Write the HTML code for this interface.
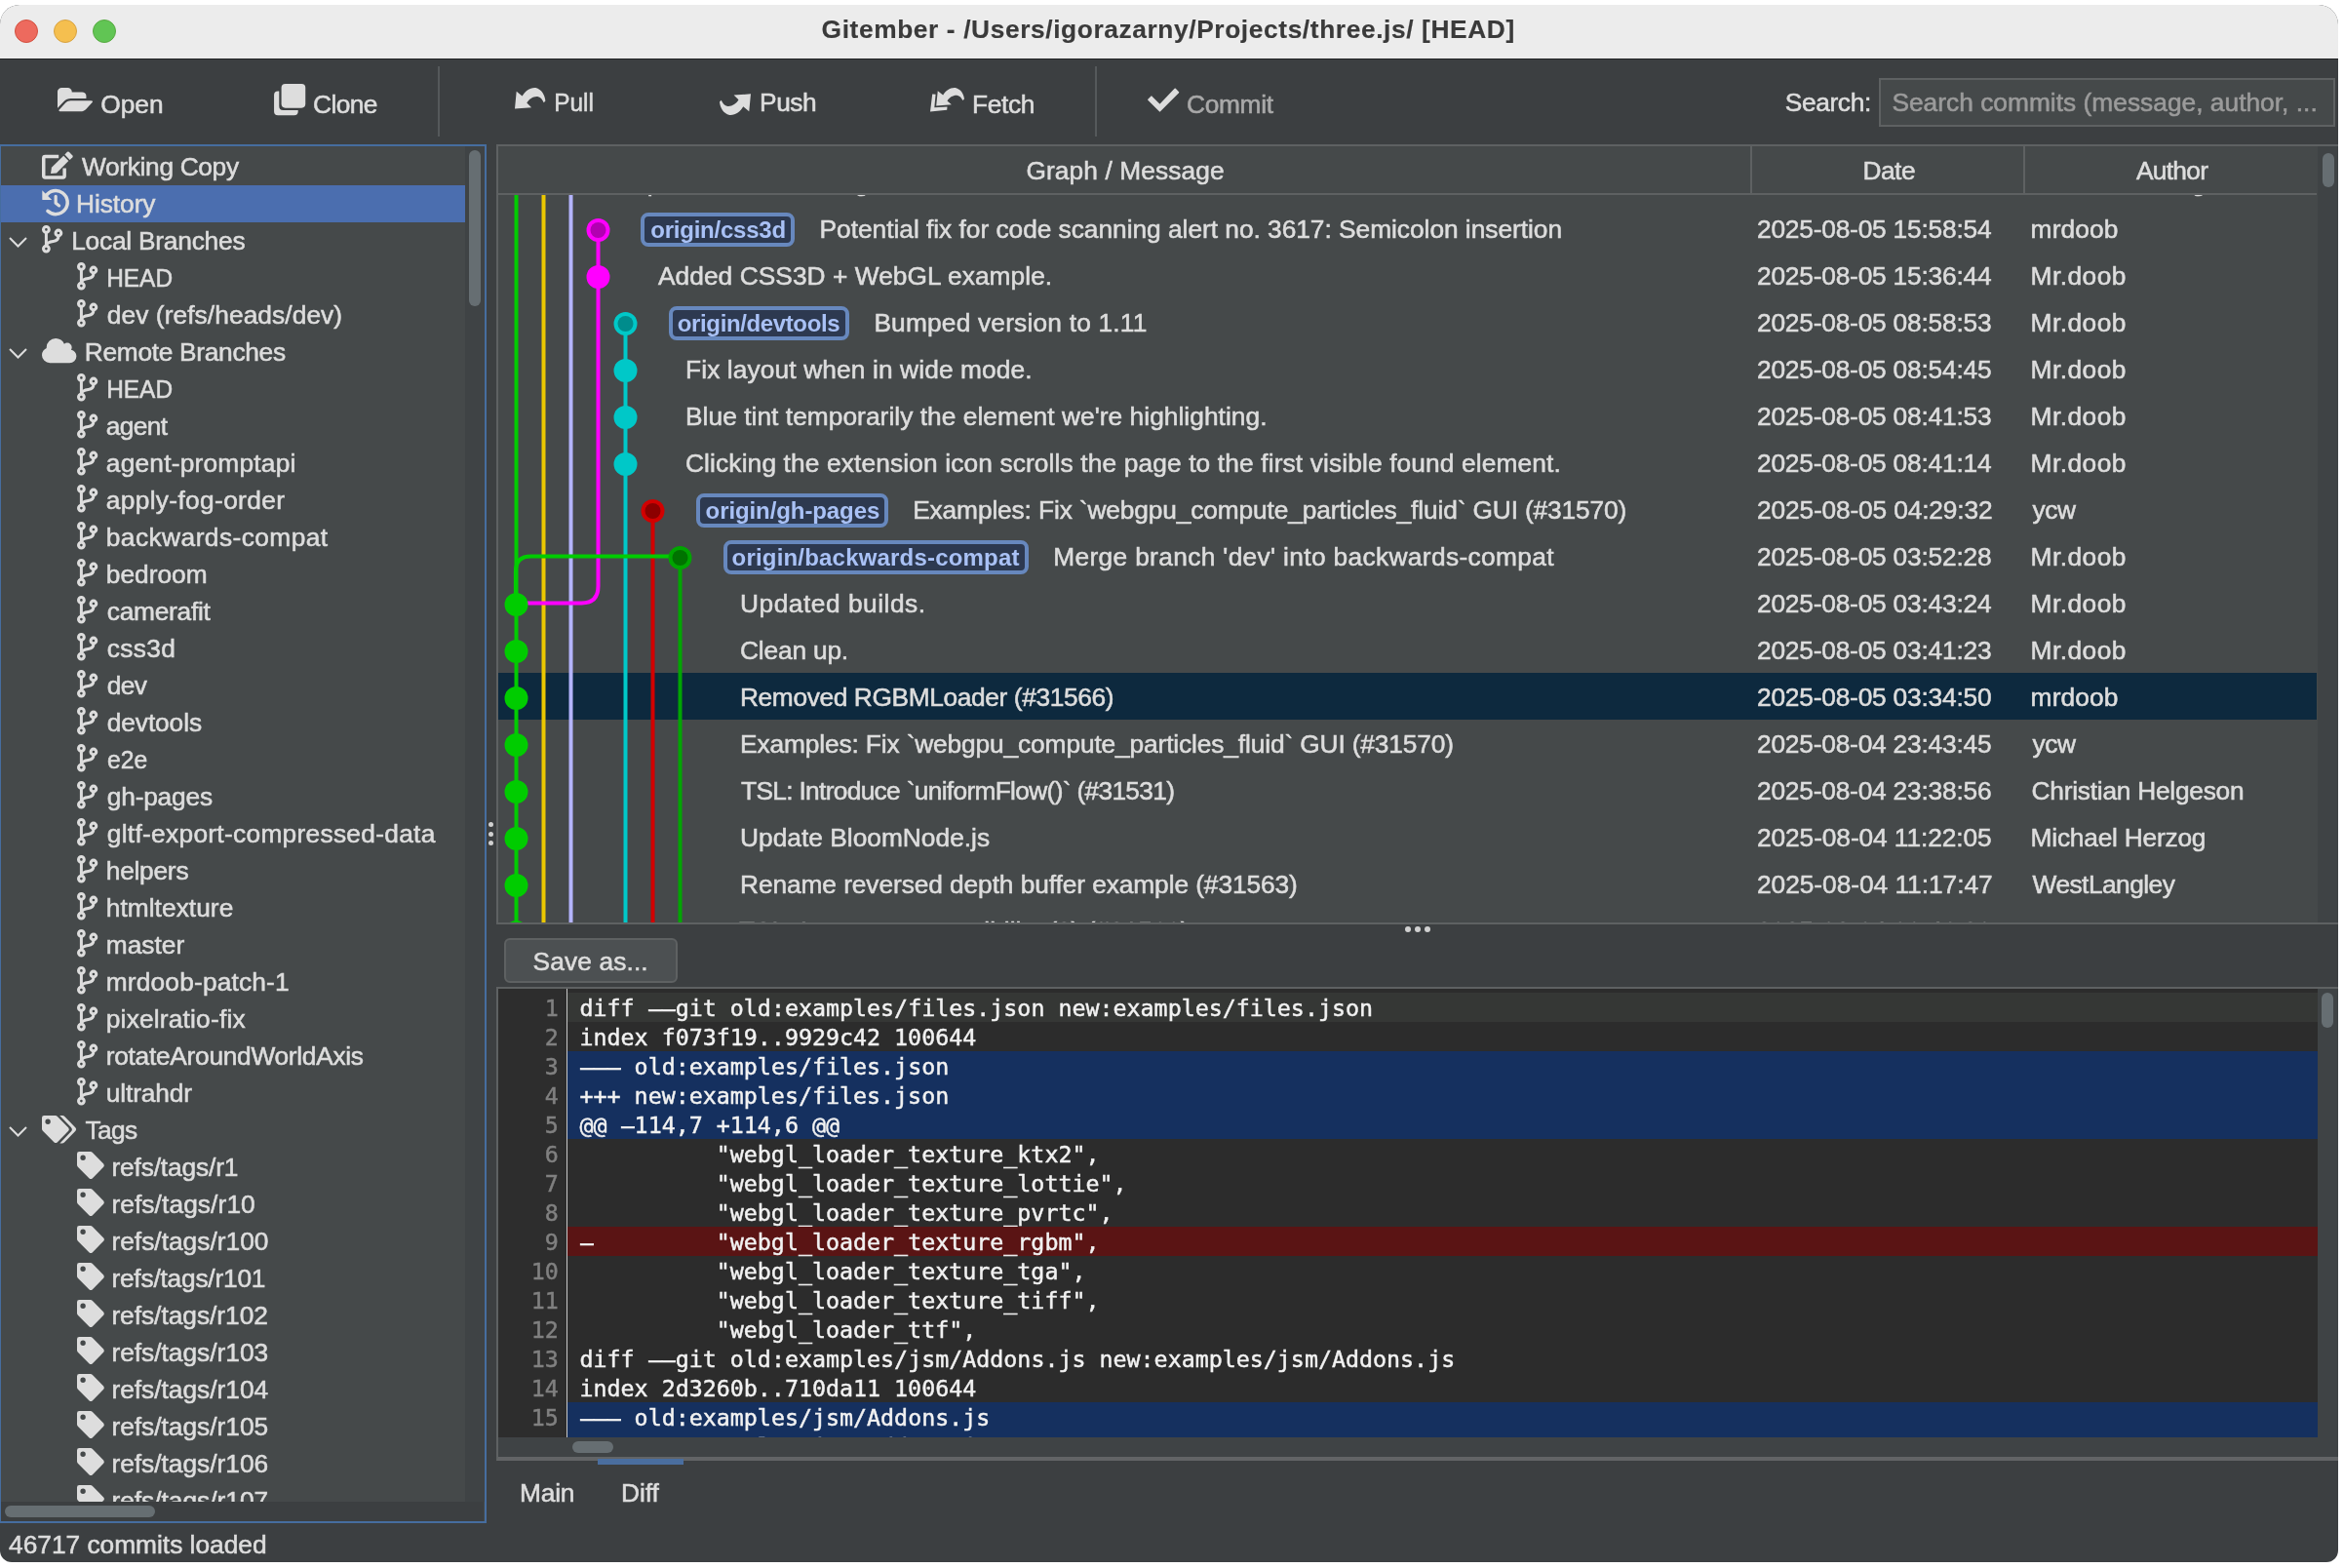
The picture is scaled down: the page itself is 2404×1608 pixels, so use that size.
<!DOCTYPE html><html><head><meta charset="utf-8"><title>Gitember</title><style>
*{box-sizing:border-box;margin:0;padding:0}
html,body{width:2404px;height:1608px;background:#fff;overflow:hidden}
body{font-family:"Liberation Sans",sans-serif;font-size:26.3px;color:#dddddd;position:relative}
#win{will-change:transform;position:absolute;left:0;top:5px;width:2398px;height:1597px;background:#3c3f41;border-radius:20px 20px 12px 12px;overflow:hidden}
.abs{position:absolute}
.t{position:absolute;white-space:pre;line-height:30px;height:30px;-webkit-text-stroke:0.55px currentColor}
.ic{position:absolute;display:block;overflow:visible}
#title{position:absolute;left:0;top:0;width:2398px;height:55px;background:#ececec}
#tline{position:absolute;left:0;top:55px;width:2398px;height:1px;background:#202224}
.dot{position:absolute;border-radius:50%}
.sep{position:absolute;width:2px;background:#55595b}
#tree{position:absolute;left:-1px;top:143px;width:500px;height:1414px;border:2px solid #466d9f;background:#45494a;overflow:hidden}
.tr{position:absolute;left:0;width:476px;height:38px}
.thumb{position:absolute;background:#666e72;border-radius:6px}
.track{position:absolute;background:#3f4345}
#table{position:absolute;left:509px;top:143px;width:1889px;height:800px;border:2px solid #5e6162;border-right:none;background:#45494a;overflow:hidden}
.row{position:absolute;left:0;width:1865px;height:48px}
.badge{position:absolute;height:34.6px;border:4px solid #6788be;border-radius:8px;background:#2d3950}
.bt{position:absolute;white-space:pre;color:#a9c1f5;font-weight:bold;font-size:24px;line-height:28px;height:28px}
#code{position:absolute;left:509px;top:1007px;width:1889px;height:486px;border:2px solid #5e6162;border-bottom:4px solid #626466;border-right:none;background:#2c2c2c;overflow:hidden}
.hy{display:inline-block;transform:scaleX(2.2)}
.mono{font-family:"DejaVu Sans Mono","Liberation Mono",monospace;font-size:23.3px;white-space:pre;line-height:30px;height:30px;position:absolute;-webkit-text-stroke:0.45px currentColor}
</style></head><body><div id="win">
<div id="title"></div><div id="tline"></div>
<div class="dot" style="left:15px;top:15px;width:24px;height:24px;background:#ed6a5e;border:1px solid #d1503f"></div>
<div class="dot" style="left:55px;top:15px;width:24px;height:24px;background:#f5bf4f;border:1px solid #d6a243"></div>
<div class="dot" style="left:95px;top:15px;width:24px;height:24px;background:#61c554;border:1px solid #58a942"></div>
<div class="t" id="ttl" style="left:842.60px;top:9.9px;letter-spacing:0.613px;color:#3a3a3a;font-weight:bold;-webkit-text-stroke:0.15px #3a3a3a;">Gitember - /Users/igorazarny/Projects/three.js/ [HEAD]</div>
<svg class="ic" style="left:59px;top:84.7px;width:36px;height:24.3px" viewBox="0 -1408 1879 1408" preserveAspectRatio="none"><path fill="#dddddd" transform="scale(1,-1)" d="M1879 584q0 -31 -31 -66l-336 -396q-43 -51 -120.5 -86.5t-143.5 -35.5h-1088q-34 0 -60.5 13t-26.5 43q0 31 31 66l336 396q43 51 120.5 86.5t143.5 35.5h1088q34 0 60.5 -13t26.5 -43zM1536 928v-160h-832q-94 0 -197 -47.5t-164 -119.5l-337 -396l-5 -6q0 4 -0.5 12.5 t-0.5 12.5v960q0 92 66 158t158 66h320q92 0 158 -66t66 -158v-32h544q92 0 158 -66t66 -158z"/></svg>
<div class="t" id="b_open" style="left:103.19px;top:86.7px;">Open</div>
<svg class="ic" style="left:280.7px;top:80.8px;width:32.3px;height:32.2px" viewBox="0 0 32 32"><rect x="7.5" y="0" width="24.5" height="24.5" rx="4" fill="#dddddd"/><path fill="#dddddd" d="M4 7.5h1.2v15.3a4 4 0 0 0 4 4H24.5V28a4 4 0 0 1-4 4H4a4 4 0 0 1-4-4V11.5a4 4 0 0 1 4-4z"/></svg>
<div class="t" id="b_clone" style="left:321.00px;top:86.7px;letter-spacing:-0.575px;">Clone</div>
<div class="sep" style="left:449px;top:63px;height:72px"></div>
<svg class="ic" id="i_pull" style="left:527.9px;top:85.2px;width:31.4px;height:21.8px" viewBox="0 0 31.4 21.8"><path fill="#dddddd" d="M1.7 3.8 L0 21.5 L17.1 20.2 L12.3 15.6 C14.5 11.5 19 8.6 23.3 9 C26.3 9.5 28.3 12 29.7 15.2 L31.4 13.4 C30.8 7.5 27.5 1.5 21.4 0 C15.5 -0.5 10.5 3.5 7.6 8.6 Z"/></svg>
<div class="t" id="b_pull" style="left:568.00px;top:84.6px;transform:scaleX(0.9286);transform-origin:2px 0;">Pull</div>
<svg class="ic" id="i_push" style="left:738px;top:91px;width:32px;height:22px" viewBox="0 0 31.4 21.8" preserveAspectRatio="none"><path fill="#dddddd" transform="rotate(180 15.7 10.9)" d="M1.7 3.8 L0 21.5 L17.1 20.2 L12.3 15.6 C14.5 11.5 19 8.6 23.3 9 C26.3 9.5 28.3 12 29.7 15.2 L31.4 13.4 C30.8 7.5 27.5 1.5 21.4 0 C15.5 -0.5 10.5 3.5 7.6 8.6 Z"/></svg>
<div class="t" id="b_push" style="left:779.00px;top:84.6px;letter-spacing:-0.400px;">Push</div>
<svg class="ic" id="i_fetch" style="left:953.5px;top:84.6px;width:35px;height:24.4px" viewBox="0 0 35 24.4"><path fill="#dddddd" d="M2.2 6.5 L5.6 6.8 L4.3 20.3 L17.5 19.4 L17.2 22.8 L0 24.4 Z"/><g transform="translate(6.2,0) scale(0.917,0.86)"><path fill="#dddddd" d="M1.7 3.8 L0 21.5 L17.1 20.2 L12.3 15.6 C14.5 11.5 19 8.6 23.3 9 C26.3 9.5 28.3 12 29.7 15.2 L31.4 13.4 C30.8 7.5 27.5 1.5 21.4 0 C15.5 -0.5 10.5 3.5 7.6 8.6 Z"/></g></svg>
<div class="t" id="b_fetch" style="left:997.00px;top:86.7px;letter-spacing:-0.325px;">Fetch</div>
<div class="sep" style="left:1123px;top:63px;height:72px"></div>
<svg class="ic" style="left:1177px;top:84.6px;width:32.4px;height:24.8px" viewBox="0 0 32.4 24.8"><path fill="#dddddd" stroke="#dddddd" stroke-width="1.6" stroke-linejoin="round" d="M0.9 12.3 L3.9 9.2 L12.5 17.7 L28.2 1.3 L31.5 4.7 L12.5 23.8 Z"/></svg>
<div class="t" id="b_commit" style="left:1217.00px;top:86.7px;letter-spacing:-0.300px;color:#a9a9a9;">Commit</div>
<div class="t" id="b_search" style="left:1830.79px;top:85.1px;letter-spacing:-0.367px;">Search:</div>
<div class="abs" style="left:1927px;top:75px;width:468px;height:50px;border:2px solid #5e6162;background:#45494a"></div>
<div class="t" id="b_ph" style="left:1940.39px;top:85.1px;letter-spacing:0.023px;color:#9b9b9b;">Search commits (message, author, ...</div>
<div id="tree">
<div class="tr" style="top:2px;">
<svg class="ic" style="left:41.8px;top:3px;width:32.2px;height:28.7px" viewBox="0 0 32.2 28.7"><path fill="none" stroke="#dddddd" stroke-width="3.5" stroke-linejoin="round" d="M17.2 5.55 H3.4 Q1.75 5.55 1.75 7.2 V25.3 Q1.75 26.95 3.4 26.95 H21.5 Q23.15 26.95 23.15 25.3 V17.5"/><path fill="#dddddd" d="M19 3.8 L9.9 16.8 Z"/><path fill="#dddddd" d="M9.9 16.8 L22.2 4.8 L27.3 10.1 L15 22.4 L9.1 23.1 Z"/><path fill="#dddddd" d="M23.4 3.5 L26 0.8 Q26.9 0 27.8 0.8 L31.4 4.5 Q32.2 5.4 31.4 6.3 L28.6 9 Z"/></svg>
<div class="t" id="tr0" style="left:83.00px;top:4.2px;letter-spacing:-0.327px;">Working Copy</div>
</div>
<div class="tr" style="top:40px;background:#4b6eaf;">
<svg class="ic" style="left:41.8px;top:3.8px;width:28px;height:27.4px" viewBox="0 0 28 27.4"><path fill="none" stroke="#dddddd" stroke-width="3.5" stroke-linecap="round" d="M3.93 7.21 A12.05 12.05 0 1 1 5.93 22.41"/><path fill="#dddddd" d="M0.3 1.2 L10.2 11 H0.9 Q0.3 11 0.3 10.4 Z"/><path fill="none" stroke="#dddddd" stroke-width="3.2" stroke-linecap="round" stroke-linejoin="round" d="M14.15 7.3 V14.2 L17.6 16.9"/></svg>
<div class="t" id="tr1" style="left:77.00px;top:4.2px;letter-spacing:-0.050px;">History</div>
</div>
<div class="tr" style="top:78px;">
<svg class="ic" style="left:8px;top:14.5px;width:19px;height:11px" viewBox="0 0 19 11"><path d="M1 1 L9.5 9.5 L18 1" fill="none" stroke="#dddddd" stroke-width="2"/></svg>
<svg class="ic" style="left:41.8px;top:3.2px;width:21.4px;height:28.5px" viewBox="0 0 21.4 28.5"><g fill="none" stroke="#dddddd"><circle cx="4.4" cy="4.4" r="2.85" stroke-width="3.1"/><circle cx="4.4" cy="24.1" r="2.85" stroke-width="3.1"/><circle cx="16.9" cy="8" r="2.85" stroke-width="3.1"/><path d="M4.4 8 V20.5" stroke-width="3"/><path d="M16.9 11.5 Q16.9 15.8 11.5 16.5 Q5.5 17.2 4.6 20.5" stroke-width="3"/></g></svg>
<div class="t" id="tr2" style="left:72.19px;top:4.2px;letter-spacing:-0.223px;">Local Branches</div>
</div>
<div class="tr" style="top:116px;">
<svg class="ic" style="left:77.8px;top:3.2px;width:21.4px;height:28.5px" viewBox="0 0 21.4 28.5"><g fill="none" stroke="#dddddd"><circle cx="4.4" cy="4.4" r="2.85" stroke-width="3.1"/><circle cx="4.4" cy="24.1" r="2.85" stroke-width="3.1"/><circle cx="16.9" cy="8" r="2.85" stroke-width="3.1"/><path d="M4.4 8 V20.5" stroke-width="3"/><path d="M16.9 11.5 Q16.9 15.8 11.5 16.5 Q5.5 17.2 4.6 20.5" stroke-width="3"/></g></svg>
<div class="t" id="tr3" style="left:107.79px;top:4.2px;transform:scaleX(0.9296);transform-origin:2px 0;">HEAD</div>
</div>
<div class="tr" style="top:154px;">
<svg class="ic" style="left:77.8px;top:3.2px;width:21.4px;height:28.5px" viewBox="0 0 21.4 28.5"><g fill="none" stroke="#dddddd"><circle cx="4.4" cy="4.4" r="2.85" stroke-width="3.1"/><circle cx="4.4" cy="24.1" r="2.85" stroke-width="3.1"/><circle cx="16.9" cy="8" r="2.85" stroke-width="3.1"/><path d="M4.4 8 V20.5" stroke-width="3"/><path d="M16.9 11.5 Q16.9 15.8 11.5 16.5 Q5.5 17.2 4.6 20.5" stroke-width="3"/></g></svg>
<div class="t" id="tr4" style="left:108.79px;top:4.2px;letter-spacing:0.084px;">dev (refs/heads/dev)</div>
</div>
<div class="tr" style="top:192px;">
<svg class="ic" style="left:8px;top:14.5px;width:19px;height:11px" viewBox="0 0 19 11"><path d="M1 1 L9.5 9.5 L18 1" fill="none" stroke="#dddddd" stroke-width="2"/></svg>
<svg class="ic" style="left:41.8px;top:5.1px;width:35.4px;height:25.2px" viewBox="0 -1408 1920 1408" preserveAspectRatio="none"><path fill="#dddddd" transform="scale(1,-1)" d="M1920 384q0 -159 -112.5 -271.5t-271.5 -112.5h-1088q-185 0 -316.5 131.5t-131.5 316.5q0 132 71 241.5t187 163.5q-2 28 -2 43q0 212 150 362t362 150q158 0 286.5 -88t187.5 -230q70 62 166 62q106 0 181 -75t75 -181q0 -75 -41 -138q129 -30 213 -134.5t84 -239.5z"/></svg>
<div class="t" id="tr5" style="left:85.79px;top:4.2px;letter-spacing:-0.300px;">Remote Branches</div>
</div>
<div class="tr" style="top:230px;">
<svg class="ic" style="left:77.8px;top:3.2px;width:21.4px;height:28.5px" viewBox="0 0 21.4 28.5"><g fill="none" stroke="#dddddd"><circle cx="4.4" cy="4.4" r="2.85" stroke-width="3.1"/><circle cx="4.4" cy="24.1" r="2.85" stroke-width="3.1"/><circle cx="16.9" cy="8" r="2.85" stroke-width="3.1"/><path d="M4.4 8 V20.5" stroke-width="3"/><path d="M16.9 11.5 Q16.9 15.8 11.5 16.5 Q5.5 17.2 4.6 20.5" stroke-width="3"/></g></svg>
<div class="t" id="tr6" style="left:107.79px;top:4.2px;transform:scaleX(0.9296);transform-origin:2px 0;">HEAD</div>
</div>
<div class="tr" style="top:268px;">
<svg class="ic" style="left:77.8px;top:3.2px;width:21.4px;height:28.5px" viewBox="0 0 21.4 28.5"><g fill="none" stroke="#dddddd"><circle cx="4.4" cy="4.4" r="2.85" stroke-width="3.1"/><circle cx="4.4" cy="24.1" r="2.85" stroke-width="3.1"/><circle cx="16.9" cy="8" r="2.85" stroke-width="3.1"/><path d="M4.4 8 V20.5" stroke-width="3"/><path d="M16.9 11.5 Q16.9 15.8 11.5 16.5 Q5.5 17.2 4.6 20.5" stroke-width="3"/></g></svg>
<div class="t" id="tr7" style="left:107.79px;top:4.2px;letter-spacing:-0.650px;">agent</div>
</div>
<div class="tr" style="top:306px;">
<svg class="ic" style="left:77.8px;top:3.2px;width:21.4px;height:28.5px" viewBox="0 0 21.4 28.5"><g fill="none" stroke="#dddddd"><circle cx="4.4" cy="4.4" r="2.85" stroke-width="3.1"/><circle cx="4.4" cy="24.1" r="2.85" stroke-width="3.1"/><circle cx="16.9" cy="8" r="2.85" stroke-width="3.1"/><path d="M4.4 8 V20.5" stroke-width="3"/><path d="M16.9 11.5 Q16.9 15.8 11.5 16.5 Q5.5 17.2 4.6 20.5" stroke-width="3"/></g></svg>
<div class="t" id="tr8" style="left:107.79px;top:4.2px;letter-spacing:0.221px;">agent-promptapi</div>
</div>
<div class="tr" style="top:344px;">
<svg class="ic" style="left:77.8px;top:3.2px;width:21.4px;height:28.5px" viewBox="0 0 21.4 28.5"><g fill="none" stroke="#dddddd"><circle cx="4.4" cy="4.4" r="2.85" stroke-width="3.1"/><circle cx="4.4" cy="24.1" r="2.85" stroke-width="3.1"/><circle cx="16.9" cy="8" r="2.85" stroke-width="3.1"/><path d="M4.4 8 V20.5" stroke-width="3"/><path d="M16.9 11.5 Q16.9 15.8 11.5 16.5 Q5.5 17.2 4.6 20.5" stroke-width="3"/></g></svg>
<div class="t" id="tr9" style="left:107.79px;top:4.2px;letter-spacing:0.343px;">apply-fog-order</div>
</div>
<div class="tr" style="top:382px;">
<svg class="ic" style="left:77.8px;top:3.2px;width:21.4px;height:28.5px" viewBox="0 0 21.4 28.5"><g fill="none" stroke="#dddddd"><circle cx="4.4" cy="4.4" r="2.85" stroke-width="3.1"/><circle cx="4.4" cy="24.1" r="2.85" stroke-width="3.1"/><circle cx="16.9" cy="8" r="2.85" stroke-width="3.1"/><path d="M4.4 8 V20.5" stroke-width="3"/><path d="M16.9 11.5 Q16.9 15.8 11.5 16.5 Q5.5 17.2 4.6 20.5" stroke-width="3"/></g></svg>
<div class="t" id="tr10" style="left:107.79px;top:4.2px;letter-spacing:0.447px;">backwards-compat</div>
</div>
<div class="tr" style="top:420px;">
<svg class="ic" style="left:77.8px;top:3.2px;width:21.4px;height:28.5px" viewBox="0 0 21.4 28.5"><g fill="none" stroke="#dddddd"><circle cx="4.4" cy="4.4" r="2.85" stroke-width="3.1"/><circle cx="4.4" cy="24.1" r="2.85" stroke-width="3.1"/><circle cx="16.9" cy="8" r="2.85" stroke-width="3.1"/><path d="M4.4 8 V20.5" stroke-width="3"/><path d="M16.9 11.5 Q16.9 15.8 11.5 16.5 Q5.5 17.2 4.6 20.5" stroke-width="3"/></g></svg>
<div class="t" id="tr11" style="left:107.79px;top:4.2px;">bedroom</div>
</div>
<div class="tr" style="top:458px;">
<svg class="ic" style="left:77.8px;top:3.2px;width:21.4px;height:28.5px" viewBox="0 0 21.4 28.5"><g fill="none" stroke="#dddddd"><circle cx="4.4" cy="4.4" r="2.85" stroke-width="3.1"/><circle cx="4.4" cy="24.1" r="2.85" stroke-width="3.1"/><circle cx="16.9" cy="8" r="2.85" stroke-width="3.1"/><path d="M4.4 8 V20.5" stroke-width="3"/><path d="M16.9 11.5 Q16.9 15.8 11.5 16.5 Q5.5 17.2 4.6 20.5" stroke-width="3"/></g></svg>
<div class="t" id="tr12" style="left:108.79px;top:4.2px;letter-spacing:-0.250px;">camerafit</div>
</div>
<div class="tr" style="top:496px;">
<svg class="ic" style="left:77.8px;top:3.2px;width:21.4px;height:28.5px" viewBox="0 0 21.4 28.5"><g fill="none" stroke="#dddddd"><circle cx="4.4" cy="4.4" r="2.85" stroke-width="3.1"/><circle cx="4.4" cy="24.1" r="2.85" stroke-width="3.1"/><circle cx="16.9" cy="8" r="2.85" stroke-width="3.1"/><path d="M4.4 8 V20.5" stroke-width="3"/><path d="M16.9 11.5 Q16.9 15.8 11.5 16.5 Q5.5 17.2 4.6 20.5" stroke-width="3"/></g></svg>
<div class="t" id="tr13" style="left:108.79px;top:4.2px;letter-spacing:0.375px;">css3d</div>
</div>
<div class="tr" style="top:534px;">
<svg class="ic" style="left:77.8px;top:3.2px;width:21.4px;height:28.5px" viewBox="0 0 21.4 28.5"><g fill="none" stroke="#dddddd"><circle cx="4.4" cy="4.4" r="2.85" stroke-width="3.1"/><circle cx="4.4" cy="24.1" r="2.85" stroke-width="3.1"/><circle cx="16.9" cy="8" r="2.85" stroke-width="3.1"/><path d="M4.4 8 V20.5" stroke-width="3"/><path d="M16.9 11.5 Q16.9 15.8 11.5 16.5 Q5.5 17.2 4.6 20.5" stroke-width="3"/></g></svg>
<div class="t" id="tr14" style="left:108.79px;top:4.2px;letter-spacing:-0.700px;">dev</div>
</div>
<div class="tr" style="top:572px;">
<svg class="ic" style="left:77.8px;top:3.2px;width:21.4px;height:28.5px" viewBox="0 0 21.4 28.5"><g fill="none" stroke="#dddddd"><circle cx="4.4" cy="4.4" r="2.85" stroke-width="3.1"/><circle cx="4.4" cy="24.1" r="2.85" stroke-width="3.1"/><circle cx="16.9" cy="8" r="2.85" stroke-width="3.1"/><path d="M4.4 8 V20.5" stroke-width="3"/><path d="M16.9 11.5 Q16.9 15.8 11.5 16.5 Q5.5 17.2 4.6 20.5" stroke-width="3"/></g></svg>
<div class="t" id="tr15" style="left:108.79px;top:4.2px;letter-spacing:-0.100px;">devtools</div>
</div>
<div class="tr" style="top:610px;">
<svg class="ic" style="left:77.8px;top:3.2px;width:21.4px;height:28.5px" viewBox="0 0 21.4 28.5"><g fill="none" stroke="#dddddd"><circle cx="4.4" cy="4.4" r="2.85" stroke-width="3.1"/><circle cx="4.4" cy="24.1" r="2.85" stroke-width="3.1"/><circle cx="16.9" cy="8" r="2.85" stroke-width="3.1"/><path d="M4.4 8 V20.5" stroke-width="3"/><path d="M16.9 11.5 Q16.9 15.8 11.5 16.5 Q5.5 17.2 4.6 20.5" stroke-width="3"/></g></svg>
<div class="t" id="tr16" style="left:108.79px;top:4.2px;transform:scaleX(0.9395);transform-origin:2px 0;">e2e</div>
</div>
<div class="tr" style="top:648px;">
<svg class="ic" style="left:77.8px;top:3.2px;width:21.4px;height:28.5px" viewBox="0 0 21.4 28.5"><g fill="none" stroke="#dddddd"><circle cx="4.4" cy="4.4" r="2.85" stroke-width="3.1"/><circle cx="4.4" cy="24.1" r="2.85" stroke-width="3.1"/><circle cx="16.9" cy="8" r="2.85" stroke-width="3.1"/><path d="M4.4 8 V20.5" stroke-width="3"/><path d="M16.9 11.5 Q16.9 15.8 11.5 16.5 Q5.5 17.2 4.6 20.5" stroke-width="3"/></g></svg>
<div class="t" id="tr17" style="left:108.79px;top:4.2px;letter-spacing:-0.200px;">gh-pages</div>
</div>
<div class="tr" style="top:686px;">
<svg class="ic" style="left:77.8px;top:3.2px;width:21.4px;height:28.5px" viewBox="0 0 21.4 28.5"><g fill="none" stroke="#dddddd"><circle cx="4.4" cy="4.4" r="2.85" stroke-width="3.1"/><circle cx="4.4" cy="24.1" r="2.85" stroke-width="3.1"/><circle cx="16.9" cy="8" r="2.85" stroke-width="3.1"/><path d="M4.4 8 V20.5" stroke-width="3"/><path d="M16.9 11.5 Q16.9 15.8 11.5 16.5 Q5.5 17.2 4.6 20.5" stroke-width="3"/></g></svg>
<div class="t" id="tr18" style="left:108.79px;top:4.2px;letter-spacing:0.296px;">gltf-export-compressed-data</div>
</div>
<div class="tr" style="top:724px;">
<svg class="ic" style="left:77.8px;top:3.2px;width:21.4px;height:28.5px" viewBox="0 0 21.4 28.5"><g fill="none" stroke="#dddddd"><circle cx="4.4" cy="4.4" r="2.85" stroke-width="3.1"/><circle cx="4.4" cy="24.1" r="2.85" stroke-width="3.1"/><circle cx="16.9" cy="8" r="2.85" stroke-width="3.1"/><path d="M4.4 8 V20.5" stroke-width="3"/><path d="M16.9 11.5 Q16.9 15.8 11.5 16.5 Q5.5 17.2 4.6 20.5" stroke-width="3"/></g></svg>
<div class="t" id="tr19" style="left:107.79px;top:4.2px;letter-spacing:-0.250px;">helpers</div>
</div>
<div class="tr" style="top:762px;">
<svg class="ic" style="left:77.8px;top:3.2px;width:21.4px;height:28.5px" viewBox="0 0 21.4 28.5"><g fill="none" stroke="#dddddd"><circle cx="4.4" cy="4.4" r="2.85" stroke-width="3.1"/><circle cx="4.4" cy="24.1" r="2.85" stroke-width="3.1"/><circle cx="16.9" cy="8" r="2.85" stroke-width="3.1"/><path d="M4.4 8 V20.5" stroke-width="3"/><path d="M16.9 11.5 Q16.9 15.8 11.5 16.5 Q5.5 17.2 4.6 20.5" stroke-width="3"/></g></svg>
<div class="t" id="tr20" style="left:107.79px;top:4.2px;letter-spacing:0.040px;">htmltexture</div>
</div>
<div class="tr" style="top:800px;">
<svg class="ic" style="left:77.8px;top:3.2px;width:21.4px;height:28.5px" viewBox="0 0 21.4 28.5"><g fill="none" stroke="#dddddd"><circle cx="4.4" cy="4.4" r="2.85" stroke-width="3.1"/><circle cx="4.4" cy="24.1" r="2.85" stroke-width="3.1"/><circle cx="16.9" cy="8" r="2.85" stroke-width="3.1"/><path d="M4.4 8 V20.5" stroke-width="3"/><path d="M16.9 11.5 Q16.9 15.8 11.5 16.5 Q5.5 17.2 4.6 20.5" stroke-width="3"/></g></svg>
<div class="t" id="tr21" style="left:107.79px;top:4.2px;letter-spacing:0.020px;">master</div>
</div>
<div class="tr" style="top:838px;">
<svg class="ic" style="left:77.8px;top:3.2px;width:21.4px;height:28.5px" viewBox="0 0 21.4 28.5"><g fill="none" stroke="#dddddd"><circle cx="4.4" cy="4.4" r="2.85" stroke-width="3.1"/><circle cx="4.4" cy="24.1" r="2.85" stroke-width="3.1"/><circle cx="16.9" cy="8" r="2.85" stroke-width="3.1"/><path d="M4.4 8 V20.5" stroke-width="3"/><path d="M16.9 11.5 Q16.9 15.8 11.5 16.5 Q5.5 17.2 4.6 20.5" stroke-width="3"/></g></svg>
<div class="t" id="tr22" style="left:107.79px;top:4.2px;letter-spacing:0.169px;">mrdoob-patch-1</div>
</div>
<div class="tr" style="top:876px;">
<svg class="ic" style="left:77.8px;top:3.2px;width:21.4px;height:28.5px" viewBox="0 0 21.4 28.5"><g fill="none" stroke="#dddddd"><circle cx="4.4" cy="4.4" r="2.85" stroke-width="3.1"/><circle cx="4.4" cy="24.1" r="2.85" stroke-width="3.1"/><circle cx="16.9" cy="8" r="2.85" stroke-width="3.1"/><path d="M4.4 8 V20.5" stroke-width="3"/><path d="M16.9 11.5 Q16.9 15.8 11.5 16.5 Q5.5 17.2 4.6 20.5" stroke-width="3"/></g></svg>
<div class="t" id="tr23" style="left:107.79px;top:4.2px;letter-spacing:0.192px;">pixelratio-fix</div>
</div>
<div class="tr" style="top:914px;">
<svg class="ic" style="left:77.8px;top:3.2px;width:21.4px;height:28.5px" viewBox="0 0 21.4 28.5"><g fill="none" stroke="#dddddd"><circle cx="4.4" cy="4.4" r="2.85" stroke-width="3.1"/><circle cx="4.4" cy="24.1" r="2.85" stroke-width="3.1"/><circle cx="16.9" cy="8" r="2.85" stroke-width="3.1"/><path d="M4.4 8 V20.5" stroke-width="3"/><path d="M16.9 11.5 Q16.9 15.8 11.5 16.5 Q5.5 17.2 4.6 20.5" stroke-width="3"/></g></svg>
<div class="t" id="tr24" style="left:107.79px;top:4.2px;letter-spacing:-0.285px;">rotateAroundWorldAxis</div>
</div>
<div class="tr" style="top:952px;">
<svg class="ic" style="left:77.8px;top:3.2px;width:21.4px;height:28.5px" viewBox="0 0 21.4 28.5"><g fill="none" stroke="#dddddd"><circle cx="4.4" cy="4.4" r="2.85" stroke-width="3.1"/><circle cx="4.4" cy="24.1" r="2.85" stroke-width="3.1"/><circle cx="16.9" cy="8" r="2.85" stroke-width="3.1"/><path d="M4.4 8 V20.5" stroke-width="3"/><path d="M16.9 11.5 Q16.9 15.8 11.5 16.5 Q5.5 17.2 4.6 20.5" stroke-width="3"/></g></svg>
<div class="t" id="tr25" style="left:107.79px;top:4.2px;letter-spacing:-0.129px;">ultrahdr</div>
</div>
<div class="tr" style="top:990px;">
<svg class="ic" style="left:8px;top:14.5px;width:19px;height:11px" viewBox="0 0 19 11"><path d="M1 1 L9.5 9.5 L18 1" fill="none" stroke="#dddddd" stroke-width="2"/></svg>
<svg class="ic" style="left:41.85px;top:3.8px;width:35.9px;height:28.8px" viewBox="0 0 35.9 28.8"><path fill="#dddddd" fill-rule="evenodd" d="M2.3 0 H13.8 Q15 0 15.9 0.9 L27.2 12.5 Q28.6 14.2 27.2 15.7 L15.7 27.4 Q14.2 28.8 12.6 27.4 L0.9 15.8 Q0 15 0 13.8 V2.3 Q0 0 2.3 0 Z M6.1 3.6 A2.7 2.7 0 1 0 6.1 9 A2.7 2.7 0 1 0 6.1 3.6 Z"/><path fill="#dddddd" d="M18.2 0 L21.2 0 Q22.4 0 23.3 0.9 L34.5 12.6 Q35.9 14.2 34.5 15.8 L23 27.5 Q22 28.4 20.7 28.4 L18.4 28.4 L29.8 16.6 Q32 14.2 29.8 11.9 Z"/></svg>
<div class="t" id="tr26" style="left:86.60px;top:4.2px;letter-spacing:-0.700px;">Tags</div>
</div>
<div class="tr" style="top:1028px;">
<svg class="ic" style="left:77.97px;top:3.3px;width:28.6px;height:28.8px" viewBox="0 0 28.6 28.8"><path fill="#dddddd" fill-rule="evenodd" d="M2.3 0 H13.8 Q15 0 15.9 0.9 L27.2 12.5 Q28.6 14.2 27.2 15.7 L15.7 27.4 Q14.2 28.8 12.6 27.4 L0.9 15.8 Q0 15 0 13.8 V2.3 Q0 0 2.3 0 Z M6.1 3.6 A2.7 2.7 0 1 0 6.1 9 A2.7 2.7 0 1 0 6.1 3.6 Z"/></svg>
<div class="t" id="tr27" style="left:113.39px;top:4.2px;letter-spacing:-0.136px;">refs/tags/r1</div>
</div>
<div class="tr" style="top:1066px;">
<svg class="ic" style="left:77.97px;top:3.3px;width:28.6px;height:28.8px" viewBox="0 0 28.6 28.8"><path fill="#dddddd" fill-rule="evenodd" d="M2.3 0 H13.8 Q15 0 15.9 0.9 L27.2 12.5 Q28.6 14.2 27.2 15.7 L15.7 27.4 Q14.2 28.8 12.6 27.4 L0.9 15.8 Q0 15 0 13.8 V2.3 Q0 0 2.3 0 Z M6.1 3.6 A2.7 2.7 0 1 0 6.1 9 A2.7 2.7 0 1 0 6.1 3.6 Z"/></svg>
<div class="t" id="tr28" style="left:113.39px;top:4.2px;letter-spacing:0.100px;">refs/tags/r10</div>
</div>
<div class="tr" style="top:1104px;">
<svg class="ic" style="left:77.97px;top:3.3px;width:28.6px;height:28.8px" viewBox="0 0 28.6 28.8"><path fill="#dddddd" fill-rule="evenodd" d="M2.3 0 H13.8 Q15 0 15.9 0.9 L27.2 12.5 Q28.6 14.2 27.2 15.7 L15.7 27.4 Q14.2 28.8 12.6 27.4 L0.9 15.8 Q0 15 0 13.8 V2.3 Q0 0 2.3 0 Z M6.1 3.6 A2.7 2.7 0 1 0 6.1 9 A2.7 2.7 0 1 0 6.1 3.6 Z"/></svg>
<div class="t" id="tr29" style="left:113.39px;top:4.2px;letter-spacing:0.023px;">refs/tags/r100</div>
</div>
<div class="tr" style="top:1142px;">
<svg class="ic" style="left:77.97px;top:3.3px;width:28.6px;height:28.8px" viewBox="0 0 28.6 28.8"><path fill="#dddddd" fill-rule="evenodd" d="M2.3 0 H13.8 Q15 0 15.9 0.9 L27.2 12.5 Q28.6 14.2 27.2 15.7 L15.7 27.4 Q14.2 28.8 12.6 27.4 L0.9 15.8 Q0 15 0 13.8 V2.3 Q0 0 2.3 0 Z M6.1 3.6 A2.7 2.7 0 1 0 6.1 9 A2.7 2.7 0 1 0 6.1 3.6 Z"/></svg>
<div class="t" id="tr30" style="left:113.39px;top:4.2px;letter-spacing:-0.208px;">refs/tags/r101</div>
</div>
<div class="tr" style="top:1180px;">
<svg class="ic" style="left:77.97px;top:3.3px;width:28.6px;height:28.8px" viewBox="0 0 28.6 28.8"><path fill="#dddddd" fill-rule="evenodd" d="M2.3 0 H13.8 Q15 0 15.9 0.9 L27.2 12.5 Q28.6 14.2 27.2 15.7 L15.7 27.4 Q14.2 28.8 12.6 27.4 L0.9 15.8 Q0 15 0 13.8 V2.3 Q0 0 2.3 0 Z M6.1 3.6 A2.7 2.7 0 1 0 6.1 9 A2.7 2.7 0 1 0 6.1 3.6 Z"/></svg>
<div class="t" id="tr31" style="left:113.39px;top:4.2px;letter-spacing:-0.023px;">refs/tags/r102</div>
</div>
<div class="tr" style="top:1218px;">
<svg class="ic" style="left:77.97px;top:3.3px;width:28.6px;height:28.8px" viewBox="0 0 28.6 28.8"><path fill="#dddddd" fill-rule="evenodd" d="M2.3 0 H13.8 Q15 0 15.9 0.9 L27.2 12.5 Q28.6 14.2 27.2 15.7 L15.7 27.4 Q14.2 28.8 12.6 27.4 L0.9 15.8 Q0 15 0 13.8 V2.3 Q0 0 2.3 0 Z M6.1 3.6 A2.7 2.7 0 1 0 6.1 9 A2.7 2.7 0 1 0 6.1 3.6 Z"/></svg>
<div class="t" id="tr32" style="left:113.39px;top:4.2px;">refs/tags/r103</div>
</div>
<div class="tr" style="top:1256px;">
<svg class="ic" style="left:77.97px;top:3.3px;width:28.6px;height:28.8px" viewBox="0 0 28.6 28.8"><path fill="#dddddd" fill-rule="evenodd" d="M2.3 0 H13.8 Q15 0 15.9 0.9 L27.2 12.5 Q28.6 14.2 27.2 15.7 L15.7 27.4 Q14.2 28.8 12.6 27.4 L0.9 15.8 Q0 15 0 13.8 V2.3 Q0 0 2.3 0 Z M6.1 3.6 A2.7 2.7 0 1 0 6.1 9 A2.7 2.7 0 1 0 6.1 3.6 Z"/></svg>
<div class="t" id="tr33" style="left:113.39px;top:4.2px;">refs/tags/r104</div>
</div>
<div class="tr" style="top:1294px;">
<svg class="ic" style="left:77.97px;top:3.3px;width:28.6px;height:28.8px" viewBox="0 0 28.6 28.8"><path fill="#dddddd" fill-rule="evenodd" d="M2.3 0 H13.8 Q15 0 15.9 0.9 L27.2 12.5 Q28.6 14.2 27.2 15.7 L15.7 27.4 Q14.2 28.8 12.6 27.4 L0.9 15.8 Q0 15 0 13.8 V2.3 Q0 0 2.3 0 Z M6.1 3.6 A2.7 2.7 0 1 0 6.1 9 A2.7 2.7 0 1 0 6.1 3.6 Z"/></svg>
<div class="t" id="tr34" style="left:113.39px;top:4.2px;">refs/tags/r105</div>
</div>
<div class="tr" style="top:1332px;">
<svg class="ic" style="left:77.97px;top:3.3px;width:28.6px;height:28.8px" viewBox="0 0 28.6 28.8"><path fill="#dddddd" fill-rule="evenodd" d="M2.3 0 H13.8 Q15 0 15.9 0.9 L27.2 12.5 Q28.6 14.2 27.2 15.7 L15.7 27.4 Q14.2 28.8 12.6 27.4 L0.9 15.8 Q0 15 0 13.8 V2.3 Q0 0 2.3 0 Z M6.1 3.6 A2.7 2.7 0 1 0 6.1 9 A2.7 2.7 0 1 0 6.1 3.6 Z"/></svg>
<div class="t" id="tr35" style="left:113.39px;top:4.2px;">refs/tags/r106</div>
</div>
<div class="tr" style="top:1370px;">
<svg class="ic" style="left:77.97px;top:3.3px;width:28.6px;height:28.8px" viewBox="0 0 28.6 28.8"><path fill="#dddddd" fill-rule="evenodd" d="M2.3 0 H13.8 Q15 0 15.9 0.9 L27.2 12.5 Q28.6 14.2 27.2 15.7 L15.7 27.4 Q14.2 28.8 12.6 27.4 L0.9 15.8 Q0 15 0 13.8 V2.3 Q0 0 2.3 0 Z M6.1 3.6 A2.7 2.7 0 1 0 6.1 9 A2.7 2.7 0 1 0 6.1 3.6 Z"/></svg>
<div class="t" id="tr36" style="left:113.39px;top:4.2px;">refs/tags/r107</div>
</div>
<div class="track" style="left:476px;top:0;width:20px;height:1390px"></div>
<div class="thumb" style="left:480px;top:4px;width:12px;height:160px"></div>
<div class="track" style="left:0;top:1390px;width:495px;height:20px;background:#3c3f41"></div>
<div class="thumb" style="left:4px;top:1394px;width:154px;height:12px"></div>
</div>
<div class="dot" style="left:501.2px;top:838.2px;width:5px;height:5px;background:#d0d0d0"></div>
<div class="dot" style="left:501.2px;top:847.8px;width:5px;height:5px;background:#d0d0d0"></div>
<div class="dot" style="left:501.2px;top:857.3px;width:5px;height:5px;background:#d0d0d0"></div>
<div id="table">
<div class="abs" style="left:0;top:48px;width:1865px;height:2px;background:#5e6162"></div>
<div class="abs" style="left:1284px;top:0;width:2px;height:48px;background:#5e6162"></div>
<div class="abs" style="left:1564px;top:0;width:2px;height:48px;background:#5e6162"></div>
<div class="t" id="h_msg" style="left:541.39px;top:10.3px;letter-spacing:0.114px;">Graph / Message</div>
<div class="t" id="h_date" style="left:1399.39px;top:10.3px;letter-spacing:-0.467px;">Date</div>
<div class="t" id="h_auth" style="left:1680.00px;top:10.3px;letter-spacing:-0.700px;">Author</div>
<div class="abs" id="tbody" style="left:0;top:50px;width:1887px;height:746px;overflow:hidden">
<div class="row cliprow" style="top:-38px;">
<div class="t" id="m-1" style="left:134.00px;top:10.2px;letter-spacing:-0.2px;">Updated test coverage.</div>
<div class="t" id="d-1" style="left:1291.00px;top:10.2px;letter-spacing:-0.200px;">2025-08-05 17:12:09</div>
<div class="t" id="a-1" style="left:1571.60px;top:10.2px;letter-spacing:-0.215px;">Michael Herzog</div>
</div>
<div class="row" style="top:10px;">
<div class="badge" style="left:146.4px;top:8.3px;width:158px"></div>
<div class="bt" id="bd0" style="left:156.19px;top:12.1px;letter-spacing:-0.218px;">origin/css3d</div>
<div class="t" id="m0" style="left:329.60px;top:10.2px;letter-spacing:-0.024px;">Potential fix for code scanning alert no. 3617: Semicolon insertion</div>
<div class="t" id="d0" style="left:1291.00px;top:10.2px;letter-spacing:-0.200px;">2025-08-05 15:58:54</div>
<div class="t" id="a0" style="left:1571.60px;top:10.2px;letter-spacing:0.140px;">mrdoob</div>
</div>
<div class="row" style="top:58px;">
<div class="t" id="m1" style="left:164.00px;top:10.2px;letter-spacing:0.052px;">Added CSS3D + WebGL example.</div>
<div class="t" id="d1" style="left:1291.00px;top:10.2px;letter-spacing:-0.200px;">2025-08-05 15:36:44</div>
<div class="t" id="a1" style="left:1571.60px;top:10.2px;letter-spacing:0.467px;">Mr.doob</div>
</div>
<div class="row" style="top:106px;">
<div class="badge" style="left:174.6px;top:8.3px;width:185.7px"></div>
<div class="bt" id="bd2" style="left:183.79px;top:12.1px;letter-spacing:-0.371px;">origin/devtools</div>
<div class="t" id="m2" style="left:385.39px;top:10.2px;letter-spacing:0.195px;">Bumped version to 1.11</div>
<div class="t" id="d2" style="left:1291.00px;top:10.2px;letter-spacing:-0.200px;">2025-08-05 08:58:53</div>
<div class="t" id="a2" style="left:1571.60px;top:10.2px;letter-spacing:0.467px;">Mr.doob</div>
</div>
<div class="row" style="top:154px;">
<div class="t" id="m3" style="left:192.00px;top:10.2px;letter-spacing:0.121px;">Fix layout when in wide mode.</div>
<div class="t" id="d3" style="left:1291.00px;top:10.2px;letter-spacing:-0.200px;">2025-08-05 08:54:45</div>
<div class="t" id="a3" style="left:1571.60px;top:10.2px;letter-spacing:0.467px;">Mr.doob</div>
</div>
<div class="row" style="top:202px;">
<div class="t" id="m4" style="left:192.00px;top:10.2px;letter-spacing:0.046px;">Blue tint temporarily the element we&#x27;re highlighting.</div>
<div class="t" id="d4" style="left:1291.00px;top:10.2px;letter-spacing:-0.200px;">2025-08-05 08:41:53</div>
<div class="t" id="a4" style="left:1571.60px;top:10.2px;letter-spacing:0.467px;">Mr.doob</div>
</div>
<div class="row" style="top:250px;">
<div class="t" id="m5" style="left:192.00px;top:10.2px;letter-spacing:0.134px;">Clicking the extension icon scrolls the page to the first visible found element.</div>
<div class="t" id="d5" style="left:1291.00px;top:10.2px;letter-spacing:-0.200px;">2025-08-05 08:41:14</div>
<div class="t" id="a5" style="left:1571.60px;top:10.2px;letter-spacing:0.467px;">Mr.doob</div>
</div>
<div class="row" style="top:298px;">
<div class="badge" style="left:203px;top:8.3px;width:196.8px"></div>
<div class="bt" id="bd6" style="left:212.60px;top:12.1px;letter-spacing:-0.093px;">origin/gh-pages</div>
<div class="t" id="m6" style="left:425.19px;top:10.2px;letter-spacing:-0.128px;">Examples: Fix `webgpu_compute_particles_fluid` GUI (#31570)</div>
<div class="t" id="d6" style="left:1291.00px;top:10.2px;letter-spacing:-0.144px;">2025-08-05 04:29:32</div>
<div class="t" id="a6" style="left:1573.60px;top:10.2px;letter-spacing:-0.400px;">ycw</div>
</div>
<div class="row" style="top:346px;">
<div class="badge" style="left:230.7px;top:8.3px;width:313px"></div>
<div class="bt" id="bd7" style="left:239.60px;top:12.1px;letter-spacing:0.186px;">origin/backwards-compat</div>
<div class="t" id="m7" style="left:569.19px;top:10.2px;letter-spacing:0.349px;">Merge branch &#x27;dev&#x27; into backwards-compat</div>
<div class="t" id="d7" style="left:1291.00px;top:10.2px;letter-spacing:-0.200px;">2025-08-05 03:52:28</div>
<div class="t" id="a7" style="left:1571.60px;top:10.2px;letter-spacing:0.467px;">Mr.doob</div>
</div>
<div class="row" style="top:394px;">
<div class="t" id="m8" style="left:248.00px;top:10.2px;letter-spacing:0.521px;">Updated builds.</div>
<div class="t" id="d8" style="left:1291.00px;top:10.2px;letter-spacing:-0.200px;">2025-08-05 03:43:24</div>
<div class="t" id="a8" style="left:1571.60px;top:10.2px;letter-spacing:0.467px;">Mr.doob</div>
</div>
<div class="row" style="top:442px;">
<div class="t" id="m9" style="left:248.00px;top:10.2px;letter-spacing:-0.175px;">Clean up.</div>
<div class="t" id="d9" style="left:1291.00px;top:10.2px;letter-spacing:-0.200px;">2025-08-05 03:41:23</div>
<div class="t" id="a9" style="left:1571.60px;top:10.2px;letter-spacing:0.467px;">Mr.doob</div>
</div>
<div class="row" style="top:490px;background:#0d293e;">
<div class="t" id="m10" style="left:248.00px;top:10.2px;letter-spacing:-0.377px;">Removed RGBMLoader (#31566)</div>
<div class="t" id="d10" style="left:1291.00px;top:10.2px;letter-spacing:-0.200px;">2025-08-05 03:34:50</div>
<div class="t" id="a10" style="left:1571.60px;top:10.2px;letter-spacing:0.140px;">mrdoob</div>
</div>
<div class="row" style="top:538px;">
<div class="t" id="m11" style="left:248.00px;top:10.2px;letter-spacing:-0.129px;">Examples: Fix `webgpu_compute_particles_fluid` GUI (#31570)</div>
<div class="t" id="d11" style="left:1291.00px;top:10.2px;letter-spacing:-0.200px;">2025-08-04 23:43:45</div>
<div class="t" id="a11" style="left:1573.60px;top:10.2px;letter-spacing:-0.400px;">ycw</div>
</div>
<div class="row" style="top:586px;">
<div class="t" id="m12" style="left:249.00px;top:10.2px;letter-spacing:-0.674px;">TSL: Introduce `uniformFlow()` (#31531)</div>
<div class="t" id="d12" style="left:1291.00px;top:10.2px;letter-spacing:-0.200px;">2025-08-04 23:38:56</div>
<div class="t" id="a12" style="left:1572.60px;top:10.2px;letter-spacing:-0.247px;">Christian Helgeson</div>
</div>
<div class="row" style="top:634px;">
<div class="t" id="m13" style="left:248.00px;top:10.2px;letter-spacing:0.017px;">Update BloomNode.js</div>
<div class="t" id="d13" style="left:1291.00px;top:10.2px;letter-spacing:-0.089px;">2025-08-04 11:22:05</div>
<div class="t" id="a13" style="left:1571.60px;top:10.2px;letter-spacing:-0.215px;">Michael Herzog</div>
</div>
<div class="row" style="top:682px;">
<div class="t" id="m14" style="left:248.00px;top:10.2px;letter-spacing:-0.082px;">Rename reversed depth buffer example (#31563)</div>
<div class="t" id="d14" style="left:1291.00px;top:10.2px;letter-spacing:-0.033px;">2025-08-04 11:17:47</div>
<div class="t" id="a14" style="left:1573.60px;top:10.2px;letter-spacing:-0.530px;">WestLangley</div>
</div>
<div class="row cliprow" style="top:730px;">
<div class="t" id="m15" style="left:247.00px;top:10.2px;">TSL: Improve compatibility (2) (#31560)</div>
<div class="t" id="d15" style="left:1291.00px;top:10.2px;letter-spacing:-0.200px;">2025-08-04 09:46:30</div>
<div class="t" id="a15" style="left:1570.80px;top:10.2px;">sunag</div>
</div>
<svg class="ic" style="left:0;top:0;width:1283px;height:746px" viewBox="0 0 1283 746"><path d="M18.5 -10 V760" stroke="#00cc00" stroke-width="4" fill="none"/><path d="M46.5 -10 V760" stroke="#ebc800" stroke-width="4" fill="none"/><path d="M74.5 -10 V760" stroke="#b4b4ff" stroke-width="4" fill="none"/><path d="M102.5 36 V401 Q102.5 418.4 85.5 418.4 H18.5" stroke="#ff00ff" stroke-width="4" fill="none"/><path d="M130.5 132 V760" stroke="#00c8c8" stroke-width="4" fill="none"/><path d="M158.5 324 V760" stroke="#d20000" stroke-width="4" fill="none"/><path d="M186.5 372 V760" stroke="#00a500" stroke-width="4" fill="none"/><path d="M186.5 370.6 H33.5 Q17.9 370.6 17.9 386 V420" stroke="#00cc00" stroke-width="4" fill="none"/><circle cx="102.5" cy="36" r="12" fill="#ff00ff"/><circle cx="102.5" cy="36" r="8" fill="#b200b2"/><circle cx="102.5" cy="84" r="12" fill="#ff00ff"/><circle cx="130.5" cy="132" r="12" fill="#00c8c8"/><circle cx="130.5" cy="132" r="8" fill="#008c8c"/><circle cx="130.5" cy="180" r="12" fill="#00c8c8"/><circle cx="130.5" cy="228" r="12" fill="#00c8c8"/><circle cx="130.5" cy="276" r="12" fill="#00c8c8"/><circle cx="158.5" cy="324" r="12" fill="#d20000"/><circle cx="158.5" cy="324" r="8" fill="#8c0000"/><circle cx="186.5" cy="372" r="12" fill="#00a500"/><circle cx="186.5" cy="372" r="8" fill="#007300"/><circle cx="18.5" cy="420" r="12" fill="#00cc00"/><circle cx="18.5" cy="468" r="12" fill="#00cc00"/><circle cx="18.5" cy="516" r="12" fill="#00cc00"/><circle cx="18.5" cy="564" r="12" fill="#00cc00"/><circle cx="18.5" cy="612" r="12" fill="#00cc00"/><circle cx="18.5" cy="660" r="12" fill="#00cc00"/><circle cx="18.5" cy="708" r="12" fill="#00cc00"/><circle cx="18.5" cy="756" r="12" fill="#00cc00"/></svg>
</div>
<div class="track" style="left:1866px;top:0;width:21px;height:796px"></div>
<div class="thumb" style="left:1870.5px;top:6.5px;width:12px;height:35px"></div>
</div>
<div class="dot" style="left:1440.9px;top:945.2px;width:6px;height:6px;background:#d0d0d0"></div>
<div class="dot" style="left:1450.9px;top:945.2px;width:6px;height:6px;background:#d0d0d0"></div>
<div class="dot" style="left:1461px;top:945.2px;width:6px;height:6px;background:#d0d0d0"></div>
<div class="abs" style="left:517px;top:957px;width:177.5px;height:45.5px;border:2px solid #5e6162;border-radius:6px;background:#4c5052"></div>
<div class="t" id="b_save" style="left:546.60px;top:965.5px;letter-spacing:0.122px;">Save as...</div>
<div id="code">
<div class="abs" style="left:0;top:0;width:70px;height:484px;background:#2d2d2d"></div>
<div class="abs" style="left:70px;top:0;width:1px;height:460px;background:#c8c8c8"></div>
<div class="abs" style="left:71px;top:4px;width:1795px;height:30px;background:#353735"></div>
<div class="mono" style="left:0;width:61.7px;top:5px;text-align:right;color:#808080">1</div>
<div class="mono" id="c1" style="left:83.5px;top:5px;color:#f2f2f2">diff <span class="hy">-</span><span class="hy">-</span>git old:examples/files.json new:examples/files.json</div>
<div class="mono" style="left:0;width:61.7px;top:35px;text-align:right;color:#808080">2</div>
<div class="mono" id="c2" style="left:83.5px;top:35px;color:#f2f2f2">index f073f19..9929c42 100644</div>
<div class="abs" style="left:71px;top:64px;width:1795px;height:30px;background:#15305f"></div>
<div class="mono" style="left:0;width:61.7px;top:65px;text-align:right;color:#808080">3</div>
<div class="mono" id="c3" style="left:83.5px;top:65px;color:#f2f2f2"><span class="hy">-</span><span class="hy">-</span><span class="hy">-</span> old:examples/files.json</div>
<div class="abs" style="left:71px;top:94px;width:1795px;height:30px;background:#15305f"></div>
<div class="mono" style="left:0;width:61.7px;top:95px;text-align:right;color:#808080">4</div>
<div class="mono" id="c4" style="left:83.5px;top:95px;color:#f2f2f2">+++ new:examples/files.json</div>
<div class="abs" style="left:71px;top:124px;width:1795px;height:30px;background:#15305f"></div>
<div class="mono" style="left:0;width:61.7px;top:125px;text-align:right;color:#808080">5</div>
<div class="mono" id="c5" style="left:83.5px;top:125px;color:#f2f2f2">@@ <span class="hy">-</span>114,7 +114,6 @@</div>
<div class="mono" style="left:0;width:61.7px;top:155px;text-align:right;color:#808080">6</div>
<div class="mono" id="c6" style="left:83.5px;top:155px;color:#f2f2f2">          &quot;webgl_loader_texture_ktx2&quot;,</div>
<div class="mono" style="left:0;width:61.7px;top:185px;text-align:right;color:#808080">7</div>
<div class="mono" id="c7" style="left:83.5px;top:185px;color:#f2f2f2">          &quot;webgl_loader_texture_lottie&quot;,</div>
<div class="mono" style="left:0;width:61.7px;top:215px;text-align:right;color:#808080">8</div>
<div class="mono" id="c8" style="left:83.5px;top:215px;color:#f2f2f2">          &quot;webgl_loader_texture_pvrtc&quot;,</div>
<div class="abs" style="left:71px;top:244px;width:1795px;height:30px;background:#5a1414"></div>
<div class="mono" style="left:0;width:61.7px;top:245px;text-align:right;color:#808080">9</div>
<div class="mono" id="c9" style="left:83.5px;top:245px;color:#f2f2f2"><span class="hy">-</span>         &quot;webgl_loader_texture_rgbm&quot;,</div>
<div class="mono" style="left:0;width:61.7px;top:275px;text-align:right;color:#808080">10</div>
<div class="mono" id="c10" style="left:83.5px;top:275px;color:#f2f2f2">          &quot;webgl_loader_texture_tga&quot;,</div>
<div class="mono" style="left:0;width:61.7px;top:305px;text-align:right;color:#808080">11</div>
<div class="mono" id="c11" style="left:83.5px;top:305px;color:#f2f2f2">          &quot;webgl_loader_texture_tiff&quot;,</div>
<div class="mono" style="left:0;width:61.7px;top:335px;text-align:right;color:#808080">12</div>
<div class="mono" id="c12" style="left:83.5px;top:335px;color:#f2f2f2">          &quot;webgl_loader_ttf&quot;,</div>
<div class="mono" style="left:0;width:61.7px;top:365px;text-align:right;color:#808080">13</div>
<div class="mono" id="c13" style="left:83.5px;top:365px;color:#f2f2f2">diff <span class="hy">-</span><span class="hy">-</span>git old:examples/jsm/Addons.js new:examples/jsm/Addons.js</div>
<div class="mono" style="left:0;width:61.7px;top:395px;text-align:right;color:#808080">14</div>
<div class="mono" id="c14" style="left:83.5px;top:395px;color:#f2f2f2">index 2d3260b..710da11 100644</div>
<div class="abs" style="left:71px;top:424px;width:1795px;height:30px;background:#15305f"></div>
<div class="mono" style="left:0;width:61.7px;top:425px;text-align:right;color:#808080">15</div>
<div class="mono" id="c15" style="left:83.5px;top:425px;color:#f2f2f2"><span class="hy">-</span><span class="hy">-</span><span class="hy">-</span> old:examples/jsm/Addons.js</div>
<div class="abs" style="left:71px;top:454px;width:1795px;height:30px;background:#15305f"></div>
<div class="mono" style="left:0;width:61.7px;top:455px;text-align:right;color:#808080">16</div>
<div class="mono" id="c16" style="left:83.5px;top:455px;color:#f2f2f2">+++ new:examples/jsm/Addons.js</div>
<div class="track" style="left:0;top:460px;width:1887px;height:20px;background:#3f4345"></div>
<div class="thumb" style="left:75.7px;top:464px;width:42px;height:12px"></div>
<div class="track" style="left:1866px;top:0;width:21px;height:460px"></div>
<div class="thumb" style="left:1870px;top:4px;width:12px;height:36px"></div>
</div>
<div class="abs" style="left:613px;top:1491px;width:88px;height:6px;background:#4a6e9f"></div>
<div class="t" id="tab_main" style="left:533.00px;top:1511.3px;letter-spacing:-0.167px;">Main</div>
<div class="t" id="tab_diff" style="left:637.00px;top:1511.3px;letter-spacing:-0.067px;">Diff</div>
<div class="t" id="status" style="left:9.00px;top:1564px;">46717 commits loaded</div>
</div></body></html>
